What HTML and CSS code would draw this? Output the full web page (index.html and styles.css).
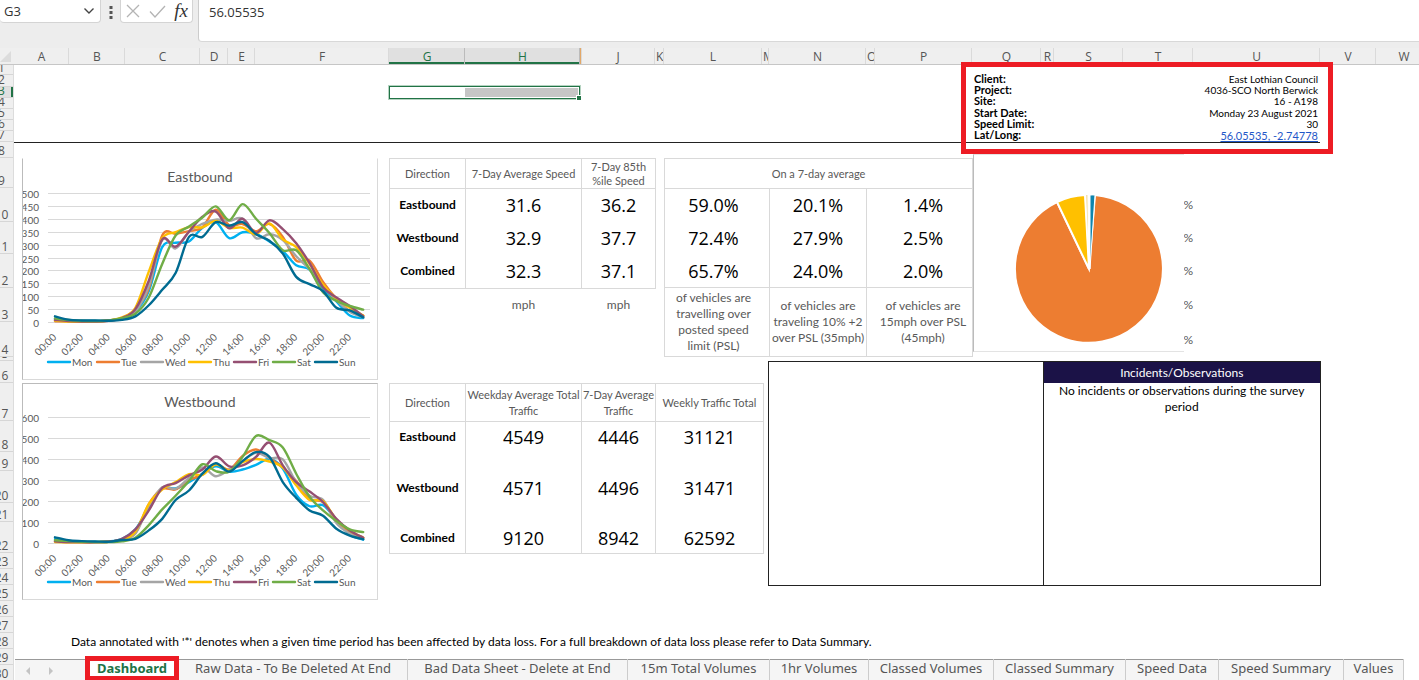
FILE: index.html
```html
<!DOCTYPE html>
<html lang="en">
<head>
<meta charset="utf-8">
<title>Traffic survey dashboard</title>
<link rel="stylesheet" href="styles.css">
</head>
<body>
<header class="formula-bar">
  <div class="name-box">
    <input class="name-input" aria-label="Name box" value="G3">
    <button class="icon-button" aria-label="Named ranges"><svg width="12" height="8" viewBox="0 0 12 8"><path d="M1.5 1.5 6 6l4.500-4.500" fill="none" stroke="#444" stroke-width="1.400"/></svg></button>
  </div>
  <svg class="grip" width="4" height="14" viewBox="0 0 4 14"><path d="M.5 1h3v3h-3zM.5 6h3v3h-3zM.5 11h3v3h-3z" fill="#555"/></svg>
  <div class="entry-tools">
    <button class="icon-button" aria-label="Cancel"><svg width="14" height="14" viewBox="0 0 14 14"><path d="M1 1l12 12M13 1 1 13" fill="none" stroke="#b4b4b4" stroke-width="1.300"/></svg></button>
    <button class="icon-button" aria-label="Enter"><svg width="17" height="13" viewBox="0 0 17 13"><path d="M1 6.500 6 12 16 1" fill="none" stroke="#b4b4b4" stroke-width="1.300"/></svg></button>
    <button class="icon-button fx" aria-label="Insert function">fx</button>
  </div>
  <input class="formula-input" aria-label="Formula bar" value="56.05535">
</header>

<main class="sheet">
  <div class="corner"><svg width="11" height="11" viewBox="0 0 11 11"><path d="M11 0v11H0z" fill="#dcdcdc"/></svg></div>
  <div class="col-heads">
    <span>A</span><span>B</span><span>C</span><span>D</span><span>E</span><span>F</span><span class="picked">G</span><span class="picked">H</span><span class="sliver">I</span><span>J</span><span>K</span><span>L</span><span>M</span><span>N</span><span>O</span><span>P</span><span>Q</span><span>R</span><span>S</span><span>T</span><span>U</span><span>V</span><span class="cut">W</span>
  </div>
  <div class="row-heads">
    <span>1</span><span>2</span><span class="picked">3</span><span>4</span><span>5</span><span>6</span><span>7</span><span>8</span><span>9</span><span>10</span><span>11</span><span>12</span><span>13</span><span>14</span><span>15</span><span>16</span><span>17</span><span>18</span><span>19</span><span>20</span><span>21</span><span>22</span><span>23</span><span>24</span><span>25</span><span>26</span><span>27</span><span>28</span><span>29</span><span>30</span>
  </div>

  <div class="cells">
    <div class="rule"></div>
    <div class="selection"><i></i><i class="filled"></i><b class="handle"></b></div>

    <dl class="info">
      <dt>Client:</dt><dd>East Lothian Council</dd>
      <dt>Project:</dt><dd>4036-SCO North Berwick</dd>
      <dt>Site:</dt><dd>16 - A198</dd>
      <dt>Start Date:</dt><dd>Monday 23 August 2021</dd>
      <dt>Speed Limit:</dt><dd>30</dd>
      <dt>Lat/Long:</dt><dd class="coords"><a href="#map">56.05535, -2.74778</a></dd>
    </dl>

    <svg class="chart chart-east" id="east" viewBox="1 1 354 220" role="img" aria-label="Eastbound"></svg>
    <svg class="chart chart-west" id="west" viewBox="1 1 354 215" role="img" aria-label="Westbound"></svg>

    <table class="stats speed">
      <colgroup><col class="w76"><col class="w116"><col class="w74"></colgroup>
      <thead><tr><th>Direction</th><th>7-Day Average Speed</th><th>7-Day 85th %ile Speed</th></tr></thead>
      <tbody>
        <tr><th>Eastbound</th><td>31.6</td><td>36.2</td></tr>
        <tr><th>Westbound</th><td>32.9</td><td>37.7</td></tr>
        <tr><th>Combined</th><td>32.3</td><td>37.1</td></tr>
      </tbody>
      <tfoot><tr><td></td><td>mph</td><td>mph</td></tr></tfoot>
    </table>

    <table class="stats share">
      <colgroup><col class="w105"><col class="w97"><col class="w106"></colgroup>
      <thead><tr><th colspan="3">On a 7-day average</th></tr></thead>
      <tbody>
        <tr><td>59.0%</td><td>20.1%</td><td>1.4%</td></tr>
        <tr><td>72.4%</td><td>27.9%</td><td>2.5%</td></tr>
        <tr><td>65.7%</td><td>24.0%</td><td>2.0%</td></tr>
      </tbody>
      <tfoot><tr><td>of vehicles are travelling over posted speed limit (PSL)</td><td>of vehicles are traveling 10% +2 over PSL (35mph)</td><td>of vehicles are 15mph over PSL (45mph)</td></tr></tfoot>
    </table>

    <table class="stats volume">
      <colgroup><col class="w76"><col class="w116"><col class="w74"><col class="w108"></colgroup>
      <thead><tr><th>Direction</th><th>Weekday Average Total Traffic</th><th>7-Day Average Traffic</th><th>Weekly Traffic Total</th></tr></thead>
      <tbody>
        <tr><th>Eastbound</th><td>4549</td><td>4446</td><td>31121</td></tr>
        <tr class="tall"><th>Westbound</th><td>4571</td><td>4496</td><td>31471</td></tr>
        <tr><th>Combined</th><td>9120</td><td>8942</td><td>62592</td></tr>
      </tbody>
    </table>

    <div class="percents"><span>%</span><span>%</span><span>%</span><span>%</span><span>%</span></div>
    <div class="pie">
      <svg viewBox="0 0 210 196" role="img" aria-label="Vehicle share">
        <g transform="translate(115 114)" stroke="#fff" stroke-width="2">
          <path d="M0 0 6-74A74 74 0 1 1-32-67Z" fill="#ed7d31"/>
          <path d="M0 0-32-67A74 74 0 0 1-4-74Z" fill="#ffc000"/>
          <path d="M1 0 1-74A74 74 0 0 1 6-74Z" fill="#0f85ad" stroke-width="1"/>
          <path d="M-3-74h2L0-12z" fill="#f5dfaa" stroke="none"/>
          <path d="M0 0-4-74M0 0-1-74" stroke-width="1"/>
        </g>
      </svg>
    </div>

    <section class="notes">
      <div class="notes-blank"></div>
      <div class="notes-main"><h2>Incidents/Observations</h2><p>No incidents or observations during the survey period</p></div>
    </section>

    <p class="footnote">Data annotated with '*' denotes when a given time period has been affected by data loss. For a full breakdown of data loss please refer to Data Summary.</p>
  </div>
</main>

<nav class="tabs">
  <div class="tab-arrows">
    <button class="icon-button" aria-label="Previous sheet"><svg width="6" height="8" viewBox="0 0 6 8"><path d="M5 0v8L1 4z" fill="#c4c4c4"/></svg></button>
    <button class="icon-button" aria-label="Next sheet"><svg width="6" height="8" viewBox="0 0 6 8"><path d="M1 0v8l4-4z" fill="#c4c4c4"/></svg></button>
  </div>
  <button class="tab current">Dashboard</button>
  <button class="tab">Raw Data - To Be Deleted At End</button>
  <button class="tab">Bad Data Sheet - Delete at End</button>
  <button class="tab">15m Total Volumes</button>
  <button class="tab">1hr Volumes</button>
  <button class="tab">Classed Volumes</button>
  <button class="tab">Classed Summary</button>
  <button class="tab">Speed Data</button>
  <button class="tab">Speed Summary</button>
  <button class="tab">Values</button>
</nav>
<script src="charts.js"></script>
</body>
</html>
```

FILE: styles.css
```css
:root {
  --cols: minmax(0, 55fr) minmax(0, 56fr) minmax(0, 75fr) minmax(0, 28fr) minmax(0, 27fr) minmax(0, 134fr) minmax(0, 76fr) minmax(0, 115fr) minmax(0, 1fr) minmax(0, 74fr) minmax(0, 9fr) minmax(0, 98fr) minmax(0, 7fr) minmax(0, 97fr) minmax(0, 9fr) minmax(0, 97fr) minmax(0, 69fr) minmax(0, 13fr) minmax(0, 69fr) minmax(0, 70fr) minmax(0, 127fr) minmax(0, 56fr) minmax(0, 43fr);
  --rows: 10px 12px 11px 11px 11px 11px 11px 16px 30px 34px 32px 34px 34px 35px 4px 22px 38px 31px 19px 32px 19px 31px 16px 16px 16px 16px 16px 16px 16px 16px;
  --green: #217346;
  --red: #ed1c24;
  --line: #d9d9d9;
  --cell-font: Lato, "Open Sans", sans-serif;
  --ui-font: "Open Sans", "Noto Sans", sans-serif;
}

* { box-sizing: border-box; }

body {
  margin: 0;
  height: 100vh;
  display: flex;
  flex-direction: column;
  overflow: hidden;
  background: #fff;
  font-family: var(--cell-font);
  font-size: 12px;
  line-height: 16px;
  color: #000;
}

button, input { font: inherit; color: inherit; border: 0; padding: 0; margin: 0; background: none; }

.icon-button { display: flex; align-items: center; justify-content: center; }

/* Formula bar */
.formula-bar {
  flex: none;
  display: flex;
  align-items: flex-start;
  height: 48px;
  background: #ededed;
  font-family: var(--ui-font);
  font-size: 13px;
  color: #333;
}
.name-box, .entry-tools {
  display: flex;
  align-items: center;
  height: 23px;
  background: #fff;
  border: 1px solid #d4d4d4;
  border-top: 0;
  border-radius: 0 0 4px 4px;
}
.name-box { width: 101px; padding: 0 5px 0 4px; border-left: 0; }
.name-input { flex: 1; min-width: 0; }
.grip { margin: 5px 7px 0 8px; }
.entry-tools { width: 73px; justify-content: space-between; padding: 0 4px 0 5px; }
.fx { font: italic 19px/20px "Liberation Serif", serif; color: #333; }
.formula-input {
  flex: 1;
  min-width: 0;
  height: 42px;
  margin-left: 5px;
  padding: 0 10px 18px 10px;
  background: #fff;
  border-left: 1px solid #ccc;
  border-bottom: 1px solid #d8d8d8;
  border-radius: 0 0 0 4px;
}

/* Sheet frame */
.sheet {
  flex: 1;
  min-height: 0;
  overflow: hidden;
  display: grid;
  grid-template-columns: 14px minmax(0, 1fr);
  grid-template-rows: 17px auto;
}
.corner { background: #efefef; border-bottom: 1px solid #c6c6c6; padding-top: 3px; }
.corner svg { display: block; }
.col-heads, .row-heads { background: #efefef; color: #555; font-family: var(--ui-font); font-size: 12px; }
.col-heads { display: grid; grid-template-columns: var(--cols); border-bottom: 1px solid #c6c6c6; overflow: hidden; }
.col-heads span {
  display: flex;
  justify-content: safe center;
  overflow: hidden;
  height: 16px;
  padding: 1px 0 0 1px;
  border-right: 1px solid #dadada;
}
.col-heads .picked { background: #e0e0e0; color: var(--green); border-right-color: #bbb; box-shadow: inset 0 -2px var(--green); }
.col-heads .sliver { color: transparent; background: #e3a868; }
.col-heads .cut { min-width: 56px; }
.row-heads {
  display: grid;
  grid-template-rows: var(--rows);
  width: 24px;
  margin-left: -10px;
  line-height: 13px;
  text-align: center;
  border-right: 1px solid #dcdcdc;
}
.row-heads span { display: flex; align-items: flex-end; justify-content: center; overflow: hidden; border-bottom: 1px solid #d6d6d6; }
.row-heads .picked { background: #e0e0e0; color: var(--green); box-shadow: inset -2px 0 var(--green); }

.cells { display: grid; grid-template-columns: var(--cols); grid-template-rows: var(--rows); }
.cells > * { min-width: 0; min-height: 0; }

.rule { grid-area: 7 / 1 / 8 / 22; border-bottom: 1px solid #222; margin-bottom: -1px; }

.selection {
  grid-area: 3 / 7 / 4 / 9;
  position: relative;
  display: grid;
  grid-template-columns: 76fr 115fr;
  margin: -1px 0;
  border: 1px solid var(--green);
  padding: 1px;
  outline: 1px solid #b5d3c1;
}
.filled { background: #c6c6c6; }
.handle { position: absolute; right: -2px; bottom: -2px; width: 4px; height: 4px; background: var(--green); outline: 1px solid #fff; }

/* Survey details */
.info {
  grid-area: 2 / 17 / 8 / 22;
  position: relative;
  display: grid;
  grid-template-columns: auto 1fr;
  grid-template-rows: 11px 11px 12px 11px 11px 11px;
  margin: -1px 0 1px;
  padding: 0 2px;
  font-size: 10px;
  line-height: 11px;
}
.info::after { content: ""; position: absolute; inset: -12px -13px -13px -11px; border: 5px solid var(--red); z-index: 3; pointer-events: none; }
.info dt { font-size: 11px; line-height: 10px; font-weight: bold; }
.info dd { margin: 0; text-align: right; }
.info .coords { font-size: 11px; }
.info a { color: #1f57c8; }

/* Charts */
.chart { display: block; width: auto; border: 1px solid var(--line); border-left-color: #bbb; background: #fff; overflow: hidden; }
.chart-east { grid-area: 9 / 1 / 17 / 7; margin: 0 11px 3px 8px; border-top-color: transparent; }
.chart-west { grid-area: 17 / 1 / 26 / 7; margin: 0 11px 1px 8px; border-top-color: #bbb; }
.chart text { fill: #595959; font-size: 10px; }
.chart .chart-title { font-size: 14px; }
.chart .grid-line { stroke: var(--line); }
.chart .series { fill: none; stroke-width: 2.400; stroke-linecap: round; stroke-linejoin: round; }

/* Tables */
.stats { border-collapse: collapse; table-layout: fixed; width: 100%; text-align: center; color: #000; }
.stats th, .stats td { padding: 0; overflow: hidden; }
.stats thead th { font-weight: normal; color: #595959; font-size: 11px; border: 1px solid var(--line); }
.stats tbody th { font-size: 12px; }
.stats tbody th, .stats tbody td { border: solid var(--line); border-width: 0 1px; }
.stats tbody td { font-family: var(--ui-font); font-size: 18px; line-height: 24px; }
.stats tbody tr:last-child > * { border-bottom-width: 1px; }
.stats tfoot td { color: #595959; font-size: 12px; }
.speed { grid-area: 9 / 7 / 14 / 11; width: calc(100% - 8px); }
.share { grid-area: 9 / 12 / 15 / 17; }
.volume { grid-area: 17 / 7 / 23 / 13; height: 170px; }
.speed thead th { line-height: 14px; }
.speed thead tr, .share thead tr { height: 30px; }
.speed tbody tr, .share tbody tr { height: 33px; }
.speed tfoot tr { height: 34px; }
.share tfoot tr { height: 69px; }
.share tfoot td { border: 1px solid var(--line); }
.share tr > td:first-child { padding: 0 13px 0 6px; }
.share tr > td:last-child { padding-left: 7px; }
.volume thead tr { height: 38px; }
.volume tbody tr { height: 31px; }
.volume .tall { height: 70px; }
.w74 { width: 74px; }
.w76 { width: 76px; }
.w97 { width: 97px; }
.w105 { width: 105px; }
.w106 { width: 106px; }
.w108 { width: 108px; }
.w116 { width: 116px; }

/* Pie */
.percents {
  grid-area: 10 / 20 / 15 / 21;
  display: grid;
  grid-template-rows: 34px 32px 34px 34px 35px;
  align-items: center;
  justify-items: end;
  color: #595959;
}
.pie { grid-area: 8 / 17 / 15 / 21; margin: 12px 9px 5px 1px; background: #fff; border: solid #e3e3e3; border-width: 1px 0; border-left: 1px solid #bbb; }
.pie svg { display: block; width: 100%; height: 100%; }

/* Notes */
.notes { grid-area: 16 / 14 / 25 / 22; display: grid; grid-template-columns: 274fr 278fr; margin: 0 -1px -1px -1px; border: 1px solid #222; }
.notes-main { border-left: 1px solid #222; text-align: center; }
.notes h2 { margin: 0; background: #1b1247; color: #fff; font-size: 12px; font-weight: normal; line-height: 21px; }
.notes p { margin: 0; padding: 0 12px; }

.footnote { grid-area: 28 / 2 / 29 / 22; margin: 0; padding: 1px 0 0 2px; white-space: nowrap; }

/* Sheet tabs */
.tabs {
  flex: none;
  position: relative;
  z-index: 2;
  height: 21px;
  margin: -21px 0 0 15px;
  display: grid;
  grid-template-columns: 70fr 94fr 229fr 220fr 142fr 99fr 125fr 132fr 93fr 125fr 60fr;
  padding-right: 15px;
  background: linear-gradient(#999, #999) 0 0 / calc(100% - 15px) 1px no-repeat, linear-gradient(#f5f5f5, #f5f5f5) 0 0 / calc(100% - 15px) 100% no-repeat, #fff;
  font-family: "Noto Sans", "Open Sans", sans-serif;
  font-size: 13px;
  color: #555;
}
.tab-arrows { display: flex; align-items: center; gap: 17px; padding: 3px 0 0 10px; }
.tab { white-space: nowrap; line-height: 16px; padding-bottom: 3px; border-right: 1px solid #ccc; }
.tab.current { position: relative; background: #fff; color: var(--green); font-weight: bold; border: 0; }
.tab.current::after { content: ""; position: absolute; inset: -3px 0 0 0; border: 5px solid var(--red); border-bottom-width: 4px; }
```

FILE: charts.js
```js
const NS = "http://www.w3.org/2000/svg";
const COLORS = { Mon: "#00b0f0", Tue: "#ed7d31", Wed: "#a5a5a5", Thu: "#ffc000", Fri: "#954f72", Sat: "#70ad47", Sun: "#006b91" };
const LEGEND_X = { Mon: 26, Tue: 75, Wed: 119, Thu: 167, Fri: 212, Sat: 251, Sun: 293 };

function add(parent, tag, attrs, text) {
  const node = document.createElementNS(NS, tag);
  for (const key in attrs) node.setAttribute(key, attrs[key]);
  if (text !== undefined) node.textContent = text;
  parent.appendChild(node);
}

function smoothPath(points) {
  let d = `M${points[0]}`;
  for (let i = 0; i < points.length - 1; i++) {
    const p0 = points[Math.max(i - 1, 0)], p1 = points[i], p2 = points[i + 1];
    const p3 = points[Math.min(i + 2, points.length - 1)];
    d += `C${p1[0] + (p2[0] - p0[0]) / 6} ${p1[1] + (p2[1] - p0[1]) / 6} ${p2[0] - (p3[0] - p1[0]) / 6} ${p2[1] - (p3[1] - p1[1]) / 6} ${p2[0]} ${p2[1]}`;
  }
  return d;
}

function drawChart(id, title, max, step, top, bottom, legendY, data) {
  const svg = document.getElementById(id);
  const y = value => bottom - value / max * (bottom - top);
  add(svg, "text", { x: 178, y: 24, "text-anchor": "middle", class: "chart-title" }, title);
  for (let v = 0; v <= max; v += step) {
    const gy = Math.round(y(v)) + 0.5;
    add(svg, "line", { x1: 26, x2: 348, y1: gy, y2: gy, class: "grid-line" });
    add(svg, "text", { x: 17, y: gy + 4, "text-anchor": "end" }, v);
  }
  for (const day in data) {
    add(svg, "path", { d: smoothPath(data[day].map((v, i) => [33 + i * 13.4, y(v)])), class: "series", stroke: COLORS[day] });
    const x = LEGEND_X[day];
    add(svg, "path", { d: `M${x} ${legendY}h22`, class: "series", stroke: COLORS[day] });
    add(svg, "text", { x: x + 24, y: legendY + 4 }, day);
  }
  for (let h = 0; h < 24; h += 2) {
    const x = 35 + h * 13.4;
    add(svg, "text", { x, y: bottom + 16, "text-anchor": "end", transform: `rotate(-45 ${x} ${bottom + 16})` }, String(h).padStart(2, "0") + ":00");
  }
}

drawChart("east", "Eastbound", 500, 50, 35, 164, 204, {
  Mon: [12,6,4,4,6,15,40,120,290,307,312,365,387,325,348,342,312,275,220,203,130,80,25,15],
  Tue: [3,2,1,2,6,15,50,130,335,342,352,367,435,375,380,352,380,330,238,238,155,90,42,25],
  Wed: [6,4,3,3,5,14,40,140,318,285,350,380,397,392,400,325,340,318,255,205,140,85,40,18],
  Thu: [5,2,1,2,6,18,55,195,325,348,368,367,392,365,366,340,382,320,290,225,145,90,55,25],
  Fri: [8,4,2,2,5,15,50,160,320,292,350,408,428,363,400,345,394,360,305,228,135,95,62,22],
  Sat: [14,8,5,4,6,15,32,95,225,335,370,405,448,395,457,400,345,278,278,205,115,82,62,48],
  Sun: [22,9,6,6,5,8,22,65,125,190,330,330,387,373,387,340,315,265,175,147,120,55,45,18]
});

drawChart("west", "Westbound", 600, 100, 34, 160, 199, {
  Mon: [18,10,6,5,7,20,65,170,260,260,290,330,365,340,350,372,400,355,230,175,180,110,40,16],
  Tue: [8,5,4,4,6,16,48,185,258,255,300,325,375,350,415,445,405,360,295,210,195,110,50,25],
  Wed: [10,6,5,4,6,16,45,175,265,258,310,360,318,350,390,430,405,398,290,225,205,95,45,20],
  Thu: [5,3,3,4,7,15,55,185,255,290,328,325,375,345,385,400,388,360,275,205,200,110,60,25],
  Fri: [8,5,4,4,6,20,65,155,262,285,322,350,412,365,370,410,478,370,290,245,195,115,60,25],
  Sat: [13,9,6,5,4,8,25,85,160,225,295,375,342,340,410,510,490,455,330,220,155,105,65,52],
  Sun: [27,13,9,7,6,14,20,60,115,205,250,330,380,340,390,433,410,290,215,155,130,68,35,18]
});
```
